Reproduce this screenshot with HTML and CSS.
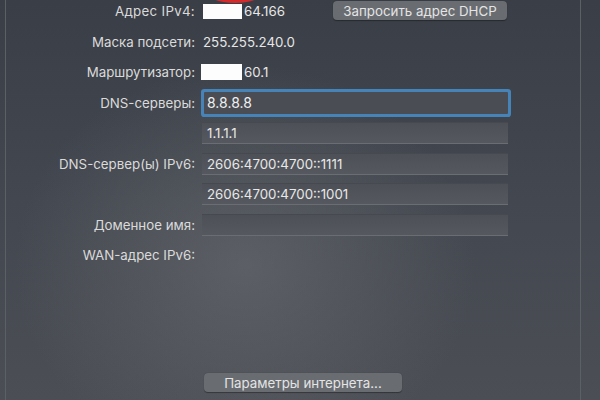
FILE: index.html
```html
<!DOCTYPE html>
<html lang="ru">
<head>
<meta charset="utf-8">
<link rel="stylesheet" href="styles.css">
</head>
<body>
<div class="panel">
  <div class="mark"></div>
  <div class="grid">
    <div class="label wide">Адрес IPv4:</div>
    <div class="value first"><span class="redact r1"></span>64.166<button class="btn dhcp">Запросить адрес DHCP</button></div>

    <div class="label">Маска подсети:</div>
    <div class="value">255.255.240.0</div>

    <div class="label">Маршрутизатор:</div>
    <div class="value"><span class="redact r2"></span>60.1</div>

    <div class="label">DNS-серверы:</div>
    <div class="field focus">8.8.8.8</div>

    <div class="label"></div>
    <div class="field">1.1.1.1</div>

    <div class="label">DNS-сервер(ы) IPv6:</div>
    <div class="field">2606:4700:4700::1111</div>

    <div class="label"></div>
    <div class="field">2606:4700:4700::1001</div>

    <div class="label">Доменное имя:</div>
    <div class="field"></div>

    <div class="label">WAN-адрес IPv6:</div>
    <div class="value"></div>
  </div>
  <div class="footer">
    <button class="btn params">Параметры интернета...</button>
  </div>
</div>
</body>
</html>
```

FILE: styles.css
```css
html, body {
  margin: 0;
  padding: 0;
  width: 600px;
  height: 400px;
  overflow: hidden;
}
body {
  background:
    radial-gradient(ellipse 230px 200px at 245px 265px, rgba(110,113,118,0.55), rgba(110,113,118,0) 100%),
    linear-gradient(180deg, #3a3e46 0%, #43474f 50%, #4b4e55 100%);
  font-family: Inter, "Liberation Sans", sans-serif;
  font-size: 13.3px;
  color: #dedede;
}
.panel {
  position: relative;
  margin-left: 5px;
  width: 574px;
  height: 400px;
  border-left: 1px solid #5b5f66;
  border-right: 1px solid #5b5f66;
  display: flex;
  flex-direction: column;
}
.mark {
  position: absolute;
  left: 195px;
  top: -30px;
  width: 68px;
  height: 33px;
  border-radius: 50%;
  background: #d42a2c;
}
.grid {
  display: grid;
  grid-template-columns: 189px 310px;
  grid-auto-rows: 22px;
  row-gap: 8.5px;
  column-gap: 6px;
}
.label {
  text-align: right;
  line-height: 22px;
  color: #dadada;
  white-space: nowrap;
}
.label.wide {
  letter-spacing: 0.3px;
}
.value {
  display: flex;
  align-items: center;
  padding-left: 2px;
  color: #e6e6e6;
  white-space: nowrap;
}
.redact {
  display: inline-block;
  background: #fdfdfd;
  margin-right: 2px;
}
.r1 { width: 39px; height: 15px; margin-top: 1px; }
.r2 { width: 41px; height: 16px; margin-left: -2px; }
.btn {
  font-family: Inter, "Liberation Sans", sans-serif;
  font-size: 13.3px;
  color: #e4e4e4;
  background: #696c71;
  border: none;
  border-radius: 4px;
  height: 19px;
  padding: 0;
  box-shadow: 0 0.5px 1px rgba(0,0,0,0.35);
  white-space: nowrap;
}
.dhcp {
  width: 174px;
  margin-left: auto;
  margin-right: 4px;
  margin-top: -1px;
}
.field {
  background: linear-gradient(180deg, #4d5056 0%, #55585e 100%);
  border-top: 1px solid #46494f;
  border-bottom: 1px solid #6a6d72;
  box-sizing: border-box;
  margin-left: 1px;
  width: 306px;
  line-height: 20px;
  padding-left: 5px;
  color: #e8e8e8;
  white-space: nowrap;
}
.field.focus {
  border: none;
  background: #4a4d53;
  box-shadow: 0 0 0 3px #4583b9;
  border-radius: 1px;
  width: 304px;
  margin-left: 3px;
  line-height: 22px;
  padding-left: 3px;
  color: #f0f0f0;
  font-size: 14px;
}
.footer {
  margin-top: auto;
  padding-bottom: 8px;
  padding-left: 198px;
}
.params {
  width: 198px;
}
```
